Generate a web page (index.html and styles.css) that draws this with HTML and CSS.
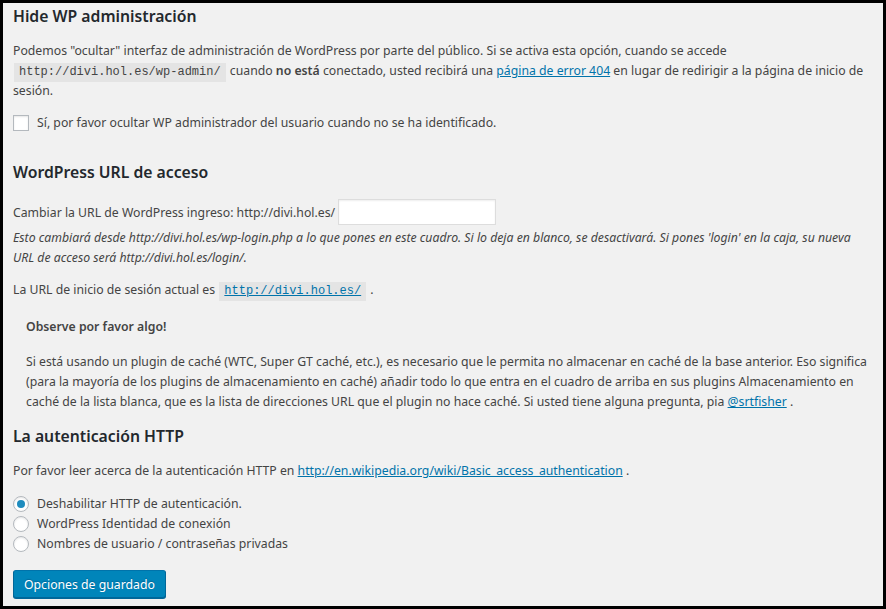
FILE: index.html
```html
<!DOCTYPE html>
<html lang="es">

<head>
    <meta charset="UTF-8">
    <meta name="viewport" content="width=device-width, initial-scale=1.0">
    <title>Hide WP administración</title>
    <link rel="stylesheet" href="styles.css">
</head>

<body>
    <div class="frame">
        <form class="settings">
            <h2 class="first">Hide WP administración</h2>
            <p class="intro">Podemos "ocultar" interfaz de administración de WordPress por parte del público. Si se activa esta opción, cuando se accede <code>http://divi.hol.es/wp-admin/</code> cuando <strong>no está</strong> conectado, usted recibirá una <a href="#">página de error 404</a> en lugar de redirigir a la página de inicio de sesión.</p>
            <label class="check-row">
                <span class="checkbox"></span>
                Sí, por favor ocultar WP administrador del usuario cuando no se ha identificado.
            </label>

            <h2 class="second">WordPress URL de acceso</h2>
            <div class="url-row">
                <span>Cambiar la URL de WordPress ingreso: http://divi.hol.es/</span>
                <input type="text" class="url-input">
            </div>
            <p class="description">Esto cambiará desde http://divi.hol.es/wp-login.php a lo que pones en este cuadro. Si lo deja en blanco, se desactivará. Si pones 'login' en la caja, su nueva URL de acceso será http://divi.hol.es/login/.</p>
            <p class="current">La URL de inicio de sesión actual es <code><a href="#">http://divi.hol.es/</a></code> .</p>

            <div class="notice">
                <p class="notice-title"><strong>Observe por favor algo!</strong></p>
                <p class="notice-text">Si está usando un plugin de caché (WTC, Super GT caché, etc.), es necesario que le permita no almacenar en caché de la base anterior. Eso significa (para la mayoría de los plugins de almacenamiento en caché) añadir todo lo que entra en el cuadro de arriba en sus plugins Almacenamiento en caché de la lista blanca, que es la lista de direcciones URL que el plugin no hace caché. Si usted tiene alguna pregunta, pia <a href="#">@srtfisher</a> .</p>
            </div>

            <h2 class="third">La autenticación HTTP</h2>
            <p class="auth-intro">Por favor leer acerca de la autenticación HTTP en <a href="#">http://en.wikipedia.org/wiki/Basic_access_authentication</a> .</p>
            <div class="radios">
                <label class="radio-row"><span class="radio checked"></span>Deshabilitar HTTP de autenticación.</label>
                <label class="radio-row"><span class="radio"></span>WordPress Identidad de conexión</label>
                <label class="radio-row"><span class="radio"></span>Nombres de usuario / contraseñas privadas</label>
            </div>
            <button type="button" class="button-primary">Opciones de guardado</button>
        </form>
    </div>
</body>

</html>
```

FILE: styles.css
```css
html {
    background: #000;
}

body {
    margin: 0;
    padding: 3px;
    font-family: "Noto Sans", "Open Sans", sans-serif;
    font-size: 12.25px;
    color: #444;
}

.frame {
    background-color: #f1f1f1;
    height: 603px;
    overflow: hidden;
}

.settings {
    padding: 0 10px;
}

h2 {
    font-size: 15.75px;
    font-weight: 600;
    line-height: 24px;
    color: #23282d;
    margin: 0;
}

h2.first {
    padding-top: 1px;
}

h2.second {
    margin-top: 27px;
}

h2.third {
    margin-top: 12px;
}

p {
    margin: 0;
    line-height: 20px;
}

a {
    color: #0073aa;
    text-decoration: underline;
}

code {
    font-family: "Liberation Mono", monospace;
    font-size: 12px;
    line-height: 1;
    background: #e4e4e4;
    padding: 2px 5px 3px;
    margin: 0 1px;
    color: #444;
}

strong {
    font-weight: 600;
}

.intro {
    margin-top: 13px;
}

.check-row {
    display: flex;
    align-items: center;
    gap: 8px;
    margin-top: 12px;
    line-height: 20px;
}

.checkbox {
    width: 14px;
    height: 14px;
    background: #fff;
    border: 1px solid #b4b9be;
    box-shadow: inset 0 1px 2px rgba(0, 0, 0, 0.1);
    flex-shrink: 0;
}

.url-row {
    display: flex;
    align-items: center;
    gap: 3px;
    height: 28px;
    margin-top: 14px;
}

.url-input {
    width: 158px;
    height: 26px;
    box-sizing: border-box;
    border: 1px solid #ddd;
    background: #fff;
    margin: 0;
    box-shadow: inset 0 1px 2px rgba(0, 0, 0, 0.07);
}

.description {
    font-style: italic;
    margin-top: 2px;
}

.current {
    margin-top: 12px;
}

.notice {
    padding-left: 13px;
}

.notice-title {
    margin-top: 17px;
}

.notice-text {
    margin-top: 15px;
}

.auth-intro {
    margin-top: 13px;
}

.radios {
    margin-top: 13px;
}

.radio-row {
    display: flex;
    align-items: center;
    gap: 8px;
    line-height: 20px;
}

.radio {
    width: 14px;
    height: 14px;
    border-radius: 50%;
    background: #fff;
    border: 1px solid #b4b9be;
    box-shadow: inset 0 1px 2px rgba(0, 0, 0, 0.1);
    position: relative;
    flex-shrink: 0;
}

.radio.checked::before {
    content: "";
    position: absolute;
    left: 3px;
    top: 3px;
    width: 8px;
    height: 8px;
    border-radius: 50%;
    background: #1e8cbe;
}

.button-primary {
    margin-top: 16px;
    height: 28px;
    padding: 0 10px;
    font-family: inherit;
    font-size: 12.25px;
    color: #fff;
    background: #0085ba;
    border: 1px solid #0073aa;
    border-color: #0073aa #006799 #006799;
    border-radius: 3px;
    box-shadow: 0 1px 0 #006799;
    text-shadow: 0 -1px 1px #006799;
    cursor: pointer;
}
```
